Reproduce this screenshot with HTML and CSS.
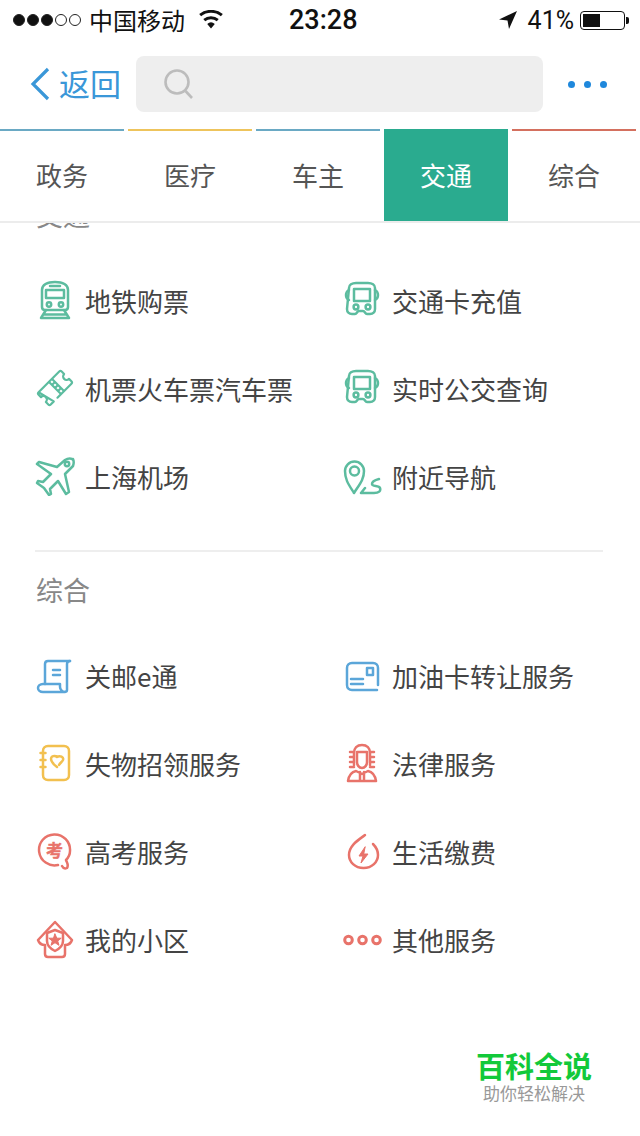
FILE: index.html
```html
<!DOCTYPE html>
<html lang="zh-CN">
<head>
  <meta charset="UTF-8">
  <title>城市服务</title>
  <link rel="stylesheet" href="styles.css">
</head>
<body>

<div class="phone">
  <div class="status-bar">
    <div class="status-left">
      <span class="signal"><i class="on"></i><i class="on"></i><i class="on"></i><i></i><i></i></span>
      <span class="carrier">中国移动</span>
      <svg class="wifi" width="26" height="20" viewBox="0 0 26 20"><path d="M13 18.500l-3.800-4.600a5.800 5.800 0 0 1 7.600 0zM7.200 11.300a9.400 9.400 0 0 1 11.600 0l1.900-2.300a12.400 12.400 0 0 0-15.400 0zM3.100 6.300a15.800 15.800 0 0 1 19.800 0l1.900-2.300a18.800 18.800 0 0 0-23.600 0z" fill="#111"/></svg>
    </div>
    <div class="status-time">23:28</div>
    <div class="status-right">
      <svg width="20" height="20" viewBox="0 0 20 20"><path d="M19 1L1 9.500l8.500 1 1.500 8.500z" fill="#111"/></svg>
      <span class="percent">41%</span>
      <span class="battery"><span class="battery-level"></span></span>
      <span class="battery-tip"></span>
    </div>
  </div>

  <div class="nav-bar">
    <div class="back">
      <svg width="22" height="34" viewBox="0 0 22 34"><path d="M19 2L4 17l15 15" fill="none" stroke="#3a97d8" stroke-width="3.200"/></svg>
      <span>返回</span>
    </div>
    <div class="search">
      <svg width="32" height="32" viewBox="0 0 32 32"><circle cx="14" cy="14" r="11.500" fill="none" stroke="#bcbcbc" stroke-width="2.600"/><path d="M22.500 23l6.500 7" stroke="#bcbcbc" stroke-width="2.600"/></svg>
    </div>
    <div class="more"><i></i><i></i><i></i></div>
  </div>

  <div class="tabs">
    <div class="tab tab-gov">政务</div>
    <div class="tab tab-med">医疗</div>
    <div class="tab tab-car">车主</div>
    <div class="tab tab-active">交通</div>
    <div class="tab tab-all">综合</div>
  </div>

  <div class="content">
    <div class="scroll">
      <section class="group">
        <h3>交通</h3>
        <div class="items green">
          <div class="item">
            <svg viewBox="0 0 40 40"><path d="M7 27V10C7 5 12 2 20 2s13 3 13 8v17c0 2-1 3-3 3H10c-2 0-3-1-3-3z"/><path d="M11 10h18v8H11zM15 6h10"/><circle cx="14" cy="24.500" r="2.200"/><circle cx="26" cy="24.500" r="2.200"/><path d="M11 30l-5 8h28l-5-8M9 34.500h22"/></svg>
            <span>地铁购票</span>
          </div>
          <div class="item">
            <svg viewBox="0 0 40 40"><path d="M7 8c0-3 3-5 7-5h12c4 0 7 2 7 5v21c0 3-2 5-5 5h-3c-2 0-2-3-4-3h-4c-2 0-2 3-4 3h-3c-3 0-5-2-5-5z"/><path d="M12 9h16v12H12zM7 10c-2 1-3 2-3 5s1 4 3 5M33 10c2 1 3 2 3 5s-1 4-3 5"/><circle cx="14" cy="27" r="2.400"/><circle cx="26" cy="27" r="2.400"/></svg>
            <span>交通卡充值</span>
          </div>
          <div class="item">
            <svg viewBox="0 0 40 40"><g transform="translate(20 20) rotate(-45) scale(.86) translate(-20 -20)"><path d="M3 10h34c1 0 2 1 2 2v4a4 4 0 0 0 0 8v4c0 1-1 2-2 2H14M8 30H3c-1 0-2-1-2-2v-4a4 4 0 0 0 0-8v-4c0-1 1-2 2-2z"/><path d="M20 11v18M25 11v18M20 15h5M20 20h5M20 25h5"/></g></svg>
            <span>机票火车票汽车票</span>
          </div>
          <div class="item">
            <svg viewBox="0 0 40 40"><path d="M7 8c0-3 3-5 7-5h12c4 0 7 2 7 5v21c0 3-2 5-5 5h-3c-2 0-2-3-4-3h-4c-2 0-2 3-4 3h-3c-3 0-5-2-5-5z"/><path d="M12 9h16v12H12zM7 10c-2 1-3 2-3 5s1 4 3 5M33 10c2 1 3 2 3 5s-1 4-3 5"/><circle cx="14" cy="27" r="2.400"/><circle cx="26" cy="27" r="2.400"/></svg>
            <span>实时公交查询</span>
          </div>
          <div class="item">
            <svg viewBox="0 0 40 40"><path d="M38 4c-1-2-5-2-8 0L22 11 4 6l-2 2 14 10-8 8-5-1-1 2 7 5 5 7 2-1-1-5 8-8 8 13 3-2-4-18 8-8c1-3 1-5 0-7z"/><circle cx="32" cy="8" r="2.200"/></svg>
            <span>上海机场</span>
          </div>
          <div class="item">
            <svg viewBox="0 0 40 40"><path d="M12 37C7 29 3 24 3 15a9.500 9.500 0 0 1 19 0c0 9-5 14-10 22z"/><circle cx="12.500" cy="15" r="4.500"/><path d="M19 37h13c5 0 7-2 6-5-1-3-8-1-8-4 0-2 3-4 7-5M19 37l4-5"/></svg>
            <span>附近导航</span>
          </div>
        </div>
      </section>

      <section class="group">
        <h3>综合</h3>
        <div class="items">
          <div class="item blue">
            <svg viewBox="0 0 40 40"><path d="M10 29V9c0-2 1-3 3-3h22"/><path d="M35 6c-2 0-3 1-3 3v26c0 1-1 2-3 2H8c-3 0-5-2-5-4s2-4 5-4h17v3c0 2 2 5 5 5"/><path d="M18 15h7M18 20h7"/></svg>
            <span>关邮e通</span>
          </div>
          <div class="item blue">
            <svg viewBox="0 0 40 40"><path d="M36 30V13c0-3-2-5-5-5H10c-3 0-5 2-5 5v17c0 3 2 5 5 5h25"/><path d="M25 13h6v7h-6zM9 24h12M9 29h12"/></svg>
            <span>加油卡转让服务</span>
          </div>
          <div class="item yellow">
            <svg viewBox="0 0 40 40"><path d="M8 8c0-3 2-5 5-5h16c3 0 5 2 5 5v24c0 3-2 5-5 5H13c-3 0-5-2-5-5z"/><path class="rings" d="M5.500 10h5M5.500 17h5M5.500 24h5M22 24c-4-3-6-5-6-8 0-3 4-4 6-2 3-2 7 0 6 3-1 2-3 3-4 5"/></svg>
            <span>失物招领服务</span>
          </div>
          <div class="item red">
            <svg viewBox="0 0 40 40"><path d="M12 22V10c0-5 3-8 8-8s8 3 8 8v12M8 9h4M8 14h4M8 19h4M8 24h4M28 9h4M28 14h4M28 19h4M28 24h4"/><path d="M15 9h10v10c0 3-2 6-5 6s-5-3-5-6zM6 38c1-6 3-9 8-10l6 3 6-3c5 1 7 4 8 10zM18 29v9M22 29v9"/></svg>
            <span>法律服务</span>
          </div>
          <div class="item red">
            <svg viewBox="0 0 40 40"><path d="M23 34a15.500 15.500 0 1 1 12-14c0 4-2 7-4 9 1 3 3 5 1 8-2 1-4 0-5-2"/><text class="glyph" x="19.500" y="25.500">考</text></svg>
            <span>高考服务</span>
          </div>
          <div class="item red">
            <svg viewBox="0 0 40 40"><path d="M23 4C18 8 7 14 7 24c0 7 6 13 14.500 13S36 31 36 24c0-4-2-8-5-11"/><path class="solid" d="M23 16l-6 9h4l-2 7 7-9h-4z"/></svg>
            <span>生活缴费</span>
          </div>
          <div class="item red">
            <svg viewBox="0 0 40 40"><path d="M10 26v9c0 2 1 3 3 3h14c2 0 3-1 3-3v-9M10 26c-3 0-6-2-7-5L20 3l17 18c-1 3-4 5-7 5"/><path d="M20 11l8 3v8c0 5-4 8-8 10-4-2-8-5-8-10v-8z"/><path class="solid" d="M20 15l1.800 4.200h4.400l-3.500 2.800 1.300 4.300-4-2.600-4 2.600 1.300-4.300-3.500-2.800h4.400z"/></svg>
            <span>我的小区</span>
          </div>
          <div class="item red">
            <svg class="dots" viewBox="0 0 40 40"><circle cx="6.500" cy="21" r="3.800"/><circle cx="20.500" cy="21" r="3.800"/><circle cx="34.500" cy="21" r="3.800"/></svg>
            <span>其他服务</span>
          </div>
        </div>
      </section>
    </div>
  </div>

  <div class="watermark">
    <div class="wm-title">百科全说</div>
    <div class="wm-sub">助你轻松解决</div>
  </div>
</div>

</body>
</html>
```

FILE: styles.css
```css
* {
  box-sizing: border-box;
}

body {
  margin: 0;
  background: #fff;
  font-family: "Noto Sans CJK SC", "Liberation Sans", sans-serif;
}

.phone {
  position: relative;
  width: 640px;
  height: 1136px;
  overflow: hidden;
  background: #fff;
}

/* status bar */
.status-bar {
  position: relative;
  display: flex;
  align-items: center;
  justify-content: space-between;
  height: 40px;
  padding: 0 11px 0 13px;
  color: #111;
}

.status-left,
.status-right {
  display: flex;
  align-items: center;
}

.signal {
  display: flex;
  gap: 2px;
  margin-right: 8px;
}

.signal i {
  width: 12px;
  height: 12px;
  border: 1px solid #222;
  border-radius: 50%;
}

.signal i.on {
  background: #111;
}

.carrier {
  font-size: 24px;
  line-height: 40px;
}

.wifi {
  margin-left: 13px;
}

.status-time {
  position: absolute;
  left: 289px;
  top: 0;
  font-family: Roboto, "Liberation Sans", sans-serif;
  font-size: 27px;
  font-weight: 500;
  line-height: 41px;
}

.percent {
  margin: 0 6px 0 10px;
  font-family: Roboto, "Liberation Sans", sans-serif;
  font-size: 25px;
  line-height: 41px;
}

.battery {
  width: 45px;
  height: 19px;
  padding: 2px;
  border: 1px solid #111;
  border-radius: 4px;
}

.battery-level {
  display: block;
  width: 17px;
  height: 13px;
  background: #111;
}

.battery-tip {
  width: 3px;
  height: 7px;
  margin-left: 1px;
  background: #111;
  border-radius: 0 2px 2px 0;
}

/* nav */
.nav-bar {
  display: flex;
  align-items: center;
  height: 89px;
  padding: 0 0 1px 29px;
}

.back {
  display: flex;
  align-items: center;
  width: 107px;
  color: #3a97d8;
  font-size: 31px;
  line-height: 44px;
}

.back svg {
  margin-right: 8px;
}

.back span {
  margin-bottom: 2px;
}

.search {
  display: flex;
  align-items: center;
  width: 407px;
  height: 56px;
  padding-left: 27px;
  background: #eeeeee;
  border-radius: 8px;
}

.more {
  display: flex;
  gap: 9px;
  margin-left: 25px;
}

.more i {
  width: 7px;
  height: 7px;
  background: #1f88dc;
  border-radius: 50%;
}

/* tabs */
.tabs {
  display: flex;
  gap: 4px;
  height: 94px;
  padding-bottom: 2px;
  border-bottom: 2px solid #ececec;
}

.tab {
  width: 124px;
  height: 92px;
  border-top: 2px solid #6aa9c4;
  color: #555;
  font-size: 26px;
  line-height: 88px;
  text-align: center;
}

.tab-med {
  border-top-color: #eec45c;
}

.tab-active {
  background: #2aab8f;
  border-top-color: #2aab8f;
  color: #fff;
}

.tab-all {
  border-top-color: #d4705f;
}

/* scrolled list */
.content {
  height: 913px;
  overflow: hidden;
}

.scroll {
  margin-top: -28px;
  padding: 0 37px 0 35px;
}

.group {
  padding-bottom: 30px;
}

.group + .group {
  padding-top: 18px;
  border-top: 2px solid #eeeeee;
}

h3 {
  margin: 0 0 0 1px;
  height: 40px;
  color: #888;
  font-size: 27px;
  font-weight: 400;
  line-height: 40px;
}

.items {
  display: grid;
  grid-template-columns: 307px 1fr;
  grid-auto-rows: 88px;
  padding-top: 21px;
}

.item {
  display: flex;
  align-items: center;
  gap: 10px;
  color: #444;
  font-size: 26px;
}

.item svg {
  flex: none;
  width: 40px;
  height: 40px;
  fill: none;
  stroke: #5cbc9f;
  stroke-width: 2.500;
  stroke-linejoin: round;
  stroke-linecap: round;
}

.item.blue svg {
  stroke: #5ba6d9;
}

.item.yellow svg {
  stroke: #f2c04f;
}

.item.red svg {
  stroke: #e8736a;
}

.item svg .solid {
  fill: #e8736a;
  stroke-width: 1;
}

.item svg.dots {
  overflow: visible;
  stroke-width: 3;
}

.item svg .glyph {
  fill: #e8736a;
  stroke: #e8736a;
  stroke-width: 0.4;
  font-size: 17px;
  font-weight: 700;
  text-anchor: middle;
}

/* watermark over the page */
.watermark {
  position: absolute;
  left: 476px;
  top: 1047px;
}

.wm-title {
  color: #12c93a;
  font-size: 29px;
  font-weight: 700;
  line-height: 36px;
}

.wm-sub {
  margin-left: 7px;
  color: #999;
  font-size: 17px;
  line-height: 20px;
}
```
